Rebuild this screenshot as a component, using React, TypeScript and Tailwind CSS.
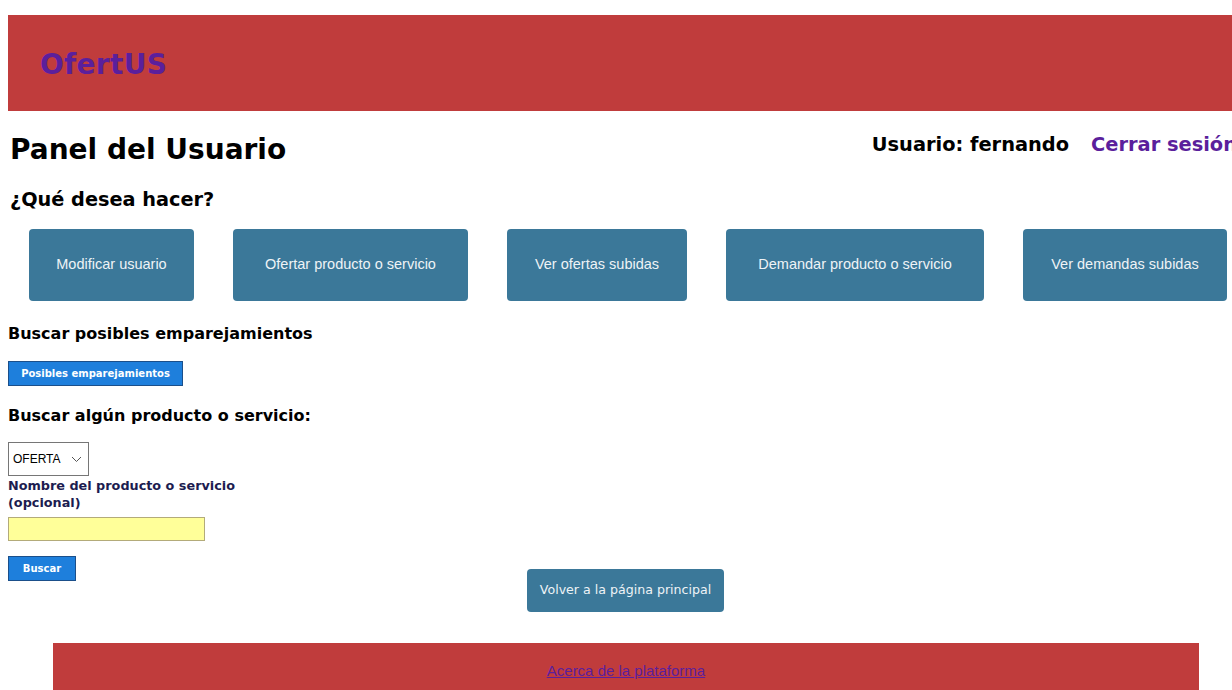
import React from "react";

const acciones = [
  { label: "Modificar usuario", w: "w-[165px]" },
  { label: "Ofertar producto o servicio", w: "w-[235px]" },
  { label: "Ver ofertas subidas", w: "w-[180px]" },
  { label: "Demandar producto o servicio", w: "w-[258px]" },
  { label: "Ver demandas subidas", w: "w-[204px]" },
];

const verdana = "font-['DejaVu_Sans',Verdana,sans-serif]";
const narrow = "font-['Liberation_Sans',Arial,sans-serif]";

function AccionBtn({ label, w }: { label: string; w: string }) {
  return (
    <button
      className={`${w} h-[72px] shrink-0 rounded-[4px] bg-[#3b7899] text-[14.5px] text-[#eef3f6] ${narrow}`}
    >
      {label}
    </button>
  );
}

function SmallBtn({ children, w }: { children: React.ReactNode; w: string }) {
  return (
    <button
      className={`${w} h-[25px] border border-[#1b4f8a] bg-[#1e7fdc] text-[10px] font-semibold text-white ${verdana}`}
    >
      {children}
    </button>
  );
}

export default function App() {
  return (
    <div className={`h-[690px] w-[1232px] overflow-hidden bg-white text-black ${verdana}`}>
      <div className="w-[1250px] pl-2 pt-[15px]">
        {/* cabecera */}
        <header className="flex h-[96px] items-center bg-[#c03c3c] pl-8 pt-[3px]">
          <h1 className="text-[28px] font-bold tracking-[0.3px] text-[#5b1f9c]">OfertUS</h1>
        </header>

        {/* titulo + sesion */}
        <div className="flex items-start justify-between pr-[13px]">
          <h1 className="mt-[23px] pl-[2px] text-[28px] font-bold leading-[32px]">
            Panel del Usuario
          </h1>
          <div className="mt-[22px] flex gap-[22px] text-[19.4px] font-bold leading-[24px]">
            <span>Usuario: fernando</span>
            <a className="text-[#5b1f9c]">Cerrar sesión</a>
          </div>
        </div>

        <h2 className="mt-[22px] pl-[2px] text-[19.3px] font-bold leading-[24px]">
          ¿Qué desea hacer?
        </h2>

        {/* acciones */}
        <div className="mt-[17px] flex gap-[39px] pl-[21px]">
          {acciones.map((a) => (
            <AccionBtn key={a.label} {...a} />
          ))}
        </div>

        <h3 className="mt-[23px] text-[16px] font-bold leading-[20px]">
          Buscar posibles emparejamientos
        </h3>
        <div className="mt-[16px]">
          <SmallBtn w="w-[175px]">Posibles emparejamientos</SmallBtn>
        </div>

        <h3 className="mt-[20px] text-[16px] font-bold leading-[20px]">
          Buscar algún producto o servicio:
        </h3>

        <div className="relative">
          <div className="mt-[16px] flex h-[34px] w-[81px] items-center justify-between border border-[#767676] bg-white pl-[4px] pr-[6px]">
            <span className={`text-[12px] ${narrow}`}>OFERTA</span>
            <svg width="11" height="7" viewBox="0 0 11 7" fill="none">
              <path d="M1 1l4.5 4.5L10 1" stroke="#555" strokeWidth="1" />
            </svg>
          </div>
          <label className="mt-[1px] block w-[240px] text-[12.8px] font-bold leading-[17px] text-[#1c1c50]">
            Nombre del producto o servicio (opcional)
          </label>
          <div className="mt-[6px] h-[24px] w-[197px] border border-[#b3ab7a] bg-[#ffff99]" />
          <div className="mt-[14px]">
            <SmallBtn w="w-[68px]">Buscar</SmallBtn>
          </div>

          {/* volver */}
          <div className="absolute left-[519px] top-[127px]">
            <button className="h-[43px] w-[197px] rounded-[4px] bg-[#3b7899] text-[12.6px] text-[#eef3f6]">
              Volver a la página principal
            </button>
          </div>
        </div>

        {/* pie */}
        <footer className="ml-[45px] mt-[62px] flex h-[60px] w-[1146px] items-start justify-center bg-[#c03c3c] pt-[17px]">
          <a className={`text-[15px] text-[#5b1f9c] underline ${narrow}`}>
            Acerca de la plataforma
          </a>
        </footer>
      </div>
    </div>
  );
}
